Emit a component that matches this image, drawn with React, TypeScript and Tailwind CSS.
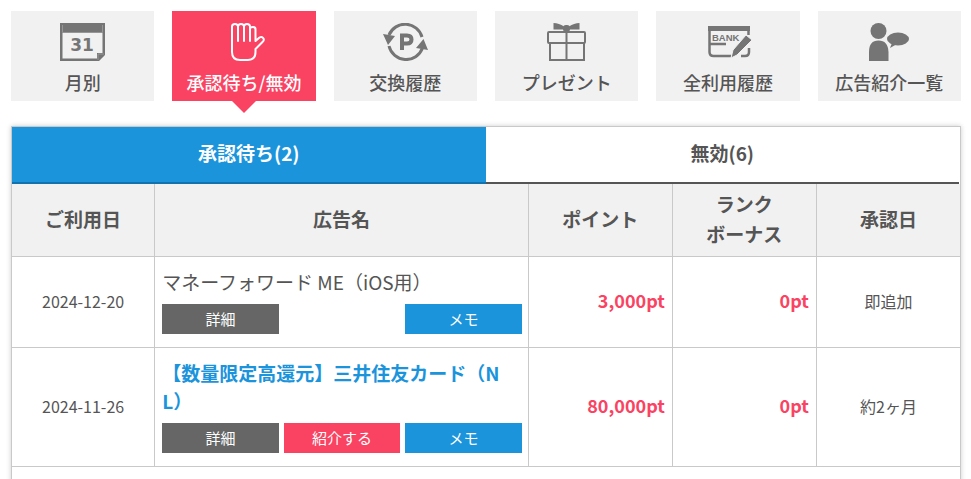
import React from "react";

function CalendarIcon() {
  return (
    <svg viewBox="0 0 45 38" className="h-[38px] w-[45px]" aria-hidden="true">
      <path fill="#757575" fillRule="evenodd" d="M0 0H45V32L39 38H0ZM2.500 10V35.500H37V30H42.500V10Z" />
      <path d="M2.500 2V9.500H42.500V2" fill="none" stroke="#a5a5a5" strokeWidth="0.700" />
      <path d="M38 37V31H44" fill="none" stroke="#999" strokeWidth="1" />
      <text x="22" y="28" textAnchor="middle" fontSize="17" fontWeight="700" fill="#757575" fontFamily="DejaVu Sans, sans-serif">31</text>
    </svg>
  );
}

function HandIcon() {
  return (
    <svg viewBox="-8 0 42 38" className="h-[38px] w-[42px]" aria-hidden="true" fill="none" stroke="#fff" strokeWidth="2" strokeLinecap="round" strokeLinejoin="round">
      <path d="M7 18V3.500Q7 1 4 1T1 3.500V29Q1 37 9 37H17Q24.500 37 24.500 29V26L31.500 19Q33.500 17.500 32.500 15.500Q31 13 28.500 14.500L24.500 18V6.500Q24.500 4 22 4Q20.500 4 19 5" />
      <path d="M7 3.500Q7 1 10 1T13 3.500V18M13 3.500Q13 1 16 1T19 3.500V18" />
    </svg>
  );
}

function ExchangeIcon() {
  return (
    <svg viewBox="0 0 45 38" className="h-[38px] w-[45px]" aria-hidden="true">
      <g fill="none" stroke="#757575" strokeWidth="3">
        <path d="M6 12A17.500 17.500 0 0 1 39 14" />
        <path d="M39.500 25A17.500 17.500 0 0 1 6 23" />
        <path d="M19 27V12.500H24Q28.500 12.500 28.500 16.500T24 20.500H19" strokeWidth="4" />
      </g>
      <path d="M0 11L12 13L5 22ZM40.500 16L45 27L33 25Z" fill="#757575" />
    </svg>
  );
}

function GiftIcon() {
  return (
    <svg viewBox="0 0 39 38" className="h-[38px] w-[39px]" aria-hidden="true">
      <g fill="none" stroke="#757575" strokeWidth="2">
        <rect x="1" y="9" width="37" height="11" rx="1" />
        <path d="M3 20V37H37V20M19.500 8V37" />
      </g>
      <path d="M6.500 0Q12 0 17 3.500V6.500H6.500ZM32.500 0Q27 0 22 3.500V6.500H32.500Z" fill="#757575" />
      <rect x="16" y="2" width="7" height="7" rx="3" fill="#757575" />
    </svg>
  );
}

function BankIcon() {
  return (
    <svg viewBox="-6 0 51 38" className="h-[38px] w-[51px]" aria-hidden="true">
      <path d="M1.500 5V29Q1.500 33 5.500 33H23M33 33H37Q41 33 41 29V25M1.500 21H18M40.500 4V12" fill="none" stroke="#757575" strokeWidth="2.500" />
      <path d="M0 3H42V8H0Z" fill="#757575" />
      <text x="4" y="18" fontSize="9.500" fontWeight="700" fill="#757575" fontFamily="Liberation Sans, sans-serif">BANK</text>
      <path d="M38 12L44 17L29 32L23 35L25 27Z" fill="#757575" stroke="#f1f1f1" strokeWidth="1" />
    </svg>
  );
}

function PersonIcon() {
  return (
    <svg viewBox="0 0 40 38" className="h-[38px] w-[40px]" aria-hidden="true" fill="#757575">
      <circle cx="9.500" cy="8" r="8" />
      <path d="M0 38V29Q0 17.500 9.500 17.500T19.500 29V38Z" />
      <ellipse cx="29" cy="16" rx="11" ry="6.500" />
      <path d="M23 20L21 25L28 21Z" />
    </svg>
  );
}

const menu = [
  { label: "月別", Icon: CalendarIcon },
  { label: "承認待ち/無効", Icon: HandIcon, active: true },
  { label: "交換履歴", Icon: ExchangeIcon },
  { label: "プレゼント", Icon: GiftIcon },
  { label: "全利用履歴", Icon: BankIcon },
  { label: "広告紹介一覧", Icon: PersonIcon },
];

const rows = [
  { date: "2024-12-20", name: "マネーフォワード ME（iOS用）", points: "3,000pt", approval: "即追加", featured: false },
  { date: "2024-11-26", name: "【数量限定高還元】三井住友カード（N\nL）", points: "80,000pt", approval: "約2ヶ月", featured: true },
];

const cell = "border-b border-l border-[#c9c9c9]";
const firstCell = "border-b border-[#c9c9c9]";
const action = "h-[30px] text-[15px] leading-[28px] text-white";

export default function App() {
  return (
    <main
      className="h-screen overflow-hidden bg-white pt-[11px] pr-[10px] pl-[11px] text-[#555]"
      style={{ fontFamily: '"Noto Sans CJK JP", sans-serif' }}
    >
      <nav className="grid grid-cols-6 gap-[18px]">
        {menu.map(({ label, Icon, active }) => (
          <a
            key={label}
            href="#"
            className={`relative flex flex-col items-center pt-3 pb-[6px] ${active ? "bg-[#fa4362] text-white" : "bg-[#f1f1f1]"}`}
          >
            <Icon />
            <span className="mt-2 text-[18px] leading-[26px] font-medium whitespace-nowrap">{label}</span>
            {active && (
              <span className="absolute top-full left-1/2 -translate-x-1/2 border-x-12 border-t-12 border-x-transparent border-t-[#fa4362]" />
            )}
          </a>
        ))}
      </nav>

      <section className="mt-[25px] border border-[#c9c9c9] shadow-[0_0_5px_rgba(0,0,0,0.2)]">
        <div className="grid grid-cols-2 pr-px text-[19px] leading-[51px] font-bold" role="tablist">
          <button type="button" role="tab" aria-selected="true" className="border-b-2 border-[#1272b0] bg-[#1b94dc] pb-1 text-white">
            承認待ち(2)
          </button>
          <button type="button" role="tab" aria-selected="false" className="border-b-2 border-[#555] bg-white pb-1">
            無効(6)
          </button>
        </div>

        <table className="w-full table-fixed border-separate border-spacing-0">
          <colgroup>
            <col className="w-[15%]" />
            <col />
            <col className="w-[15.2%]" />
            <col className="w-[15.2%]" />
            <col className="w-[15.2%]" />
          </colgroup>
          <thead>
            <tr className="bg-[#f1f1f1] text-[19px] leading-[30px]">
              <th className={`${firstCell} pt-[5px] pb-[7px]`}>ご利用日</th>
              <th className={`${cell} pt-[5px] pb-[7px]`}>広告名</th>
              <th className={`${cell} pt-[5px] pb-[7px]`}>ポイント</th>
              <th className={`${cell} pt-[5px] pb-[7px]`}>
                ランク
                <br />
                ボーナス
              </th>
              <th className={`${cell} pt-[5px] pb-[7px]`}>承認日</th>
            </tr>
          </thead>
          <tbody>
            {rows.map((row) => (
              <tr key={row.date}>
                <td className={`${firstCell} pb-[3px] text-center text-[16px]`}>{row.date}</td>
                <td className={`${cell} pt-[11px] pr-[6px] pb-[13px] pl-[7px]`}>
                  {row.featured ? (
                    <a href="#" className="block text-[19px] leading-[28px] font-bold whitespace-pre-line text-[#1b94dc]">
                      {row.name}
                    </a>
                  ) : (
                    <p className="text-[19px] leading-[28px]">{row.name}</p>
                  )}
                  <div className="mt-[8px] grid grid-cols-3 gap-[5px]">
                    <button type="button" className={`${action} bg-[#666]`}>詳細</button>
                    {row.featured && (
                      <button type="button" className={`${action} bg-[#fa4362]`}>紹介する</button>
                    )}
                    <button type="button" className={`${action} col-start-3 bg-[#1b94dc]`}>メモ</button>
                  </div>
                </td>
                <td className={`${cell} pr-[7px] pb-[3px] text-right text-[18px] font-bold text-[#fa4362]`}>{row.points}</td>
                <td className={`${cell} pr-[7px] pb-[3px] text-right text-[18px] font-bold text-[#fa4362]`}>0pt</td>
                <td className={`${cell} pb-[3px] text-center text-[16px]`}>{row.approval}</td>
              </tr>
            ))}
          </tbody>
        </table>
        <div className="h-12" />
      </section>
    </main>
  );
}
